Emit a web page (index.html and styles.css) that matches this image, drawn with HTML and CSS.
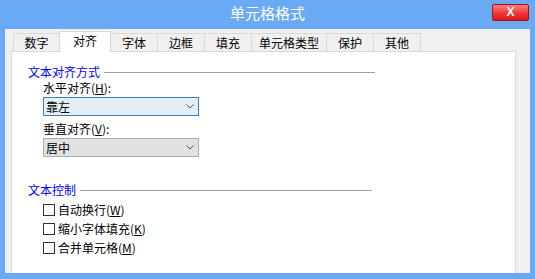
FILE: index.html
```html
<!DOCTYPE html>
<html lang="zh-CN">
<head>
    <meta charset="UTF-8">
    <meta name="viewport" content="width=device-width, initial-scale=1.0">
    <title>单元格格式</title>

    <link rel="stylesheet" href="styles.css">
</head>
<body>
<!-- BARRA DE TITULO -->
<header class="titulo">
    <span>单元格格式</span>
    <div class="cerrar">X</div>
</header>

<!-- VENTANA -->
<main class="marco">
    <nav class="pestanas">
        <div class="pestana">数字</div>
        <div class="pestana activa">对齐</div>
        <div class="pestana">字体</div>
        <div class="pestana">边框</div>
        <div class="pestana">填充</div>
        <div class="pestana">单元格类型</div>
        <div class="pestana">保护</div>
        <div class="pestana">其他</div>
    </nav>

    <section class="panel">
        <!-- ALINEACION -->
        <div class="grupo">
            <div class="leyenda"><span>文本对齐方式</span><i></i></div>
            <div class="contenido">
                <div class="etiqueta">水平对齐(<u>H</u>):</div>
                <div class="combo foco">
                    <span>靠左</span>
                    <svg width="8" height="5" viewBox="0 0 8 5"><path d="M0.5 0.5 L4 4 L7.5 0.5" fill="none" stroke="#555" stroke-width="1"/></svg>
                </div>
                <div class="etiqueta separa">垂直对齐(<u>V</u>):</div>
                <div class="combo">
                    <span>居中</span>
                    <svg width="8" height="5" viewBox="0 0 8 5"><path d="M0.5 0.5 L4 4 L7.5 0.5" fill="none" stroke="#555" stroke-width="1"/></svg>
                </div>
            </div>
        </div>

        <!-- CONTROL DE TEXTO -->
        <div class="grupo control">
            <div class="leyenda"><span>文本控制</span><i></i></div>
            <div class="contenido">
                <label class="check"><span class="caja"></span>自动换行(<u>W</u>)</label>
                <label class="check"><span class="caja"></span>缩小字体填充(<u>K</u>)</label>
                <label class="check"><span class="caja"></span>合并单元格(<u>M</u>)</label>
            </div>
        </div>
    </section>
</main>
</body>
</html>
```

FILE: styles.css
```css
body{
    margin: 0;
    height: 279px;
    overflow: hidden;
    background-color: #6aaaf4;
    font-family: "Noto Sans CJK SC", "Liberation Sans", sans-serif;
    font-size: 12px;
    color: black;
}

.titulo{
    position: relative;
    height: 29px;
    display: flex;
    justify-content: center;
    color: white;
    font-size: 15px;
    line-height: 25px;
}

.cerrar{
    position: absolute;
    top: 4px;
    left: 492px;
    width: 37px;
    height: 17px;
    box-sizing: border-box;
    border: 1px solid #b21010;
    border-radius: 2px;
    background: linear-gradient(#ff8080, #f03030 60%, #e01818);
    font-family: "Liberation Sans", sans-serif;
    font-weight: bold;
    font-size: 12px;
    line-height: 15px;
    text-align: center;
    color: white;
}

.marco{
    height: 244px;
    margin: 0 5px;
    padding: 2px 14px 0 6px;
    box-sizing: border-box;
    background-color: #f0f0f0;
    display: flex;
    flex-direction: column;
}

.pestanas{
    display: flex;
    align-items: flex-end;
    height: 21px;
    padding-left: 2px;
}

.pestana{
    min-width: 48px;
    height: 18px;
    box-sizing: border-box;
    margin-bottom: 1px;
    margin-left: -1px;
    padding: 0 7px;
    border: 1px solid #d9d9d9;
    border-bottom: none;
    background-color: #f0f0f0;
    line-height: 17px;
    text-align: center;
    &:first-child{
        margin-left: 0;
        min-width: 47px;
    }
}

.activa{
    position: relative;
    z-index: 1;
    min-width: 52px;
    height: 21px;
    margin-bottom: 0;
    background-color: white;
}

.panel{
    flex: 1;
    margin-top: -1px;
    padding: 12px 0 0 16px;
    background-color: white;
    border: 1px solid #d9d9d9;
    border-bottom: none;
}

.grupo{
    width: 347px;
}

.control{
    width: 344px;
    margin-top: 25px;
}

.leyenda{
    display: flex;
    align-items: center;
    gap: 4px;
    color: #0000ff;
    line-height: 16px;
    & i{
        flex: 1;
        height: 1px;
        margin-top: 1px;
        background-color: #a0a0a0;
    }
}

.contenido{
    padding-left: 15px;
}

.etiqueta{
    line-height: 16px;
}

.separa{
    margin-top: 5px;
}

.combo{
    width: 156px;
    height: 19px;
    box-sizing: border-box;
    margin-top: 1px;
    padding: 0 4px 0 2px;
    border: 1px solid #adadad;
    background-color: #e1e1e1;
    display: flex;
    justify-content: space-between;
    align-items: center;
    line-height: 17px;
}

.foco{
    border-color: #3c7fb1;
    background-color: #e5eef7;
}

.check{
    display: flex;
    align-items: center;
    height: 19px;
    line-height: 19px;
    &:first-child{
        margin-top: 2px;
    }
}

.caja{
    width: 12px;
    height: 12px;
    box-sizing: border-box;
    margin-right: 3px;
    border: 1px solid #333;
    background-color: white;
}

u{
    text-decoration: underline;
}
```
